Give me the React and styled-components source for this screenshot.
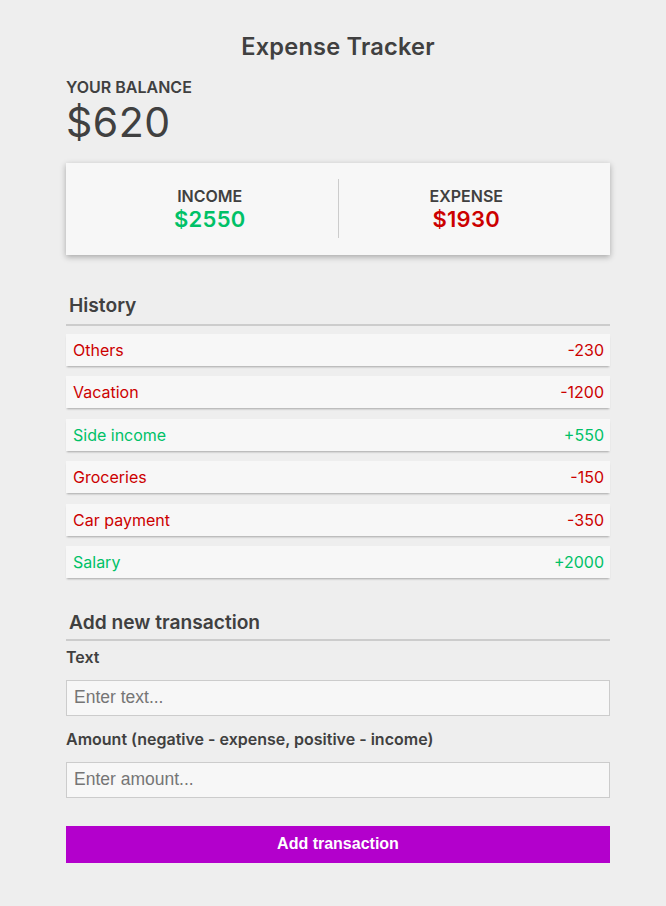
import React from 'react'
import styled, { createGlobalStyle } from 'styled-components'

const GlobalStyle = createGlobalStyle`
  body {
    margin: 0;
    background: #eeeeee;
    font-family: Inter, "Noto Sans", sans-serif;
    color: #404040;
  }
`

const transactions = [
  { id: 1, text: 'Others', amount: -230 },
  { id: 2, text: 'Vacation', amount: -1200 },
  { id: 3, text: 'Side income', amount: 550 },
  { id: 4, text: 'Groceries', amount: -150 },
  { id: 5, text: 'Car payment', amount: -350 },
  { id: 6, text: 'Salary', amount: 2000 },
]

const App = () => {
  return (
    <>
      <GlobalStyle />
      <Container>
        <Title>Expense Tracker</Title>
        <BalanceLabel>YOUR BALANCE</BalanceLabel>
        <Balance>$620</Balance>

        <SummaryCard>
          <SummaryCol $side="left">
            <SummaryLabel>INCOME</SummaryLabel>
            <Money $positive>$2550</Money>
          </SummaryCol>
          <Divider />
          <SummaryCol $side="right">
            <SummaryLabel>EXPENSE</SummaryLabel>
            <Money>$1930</Money>
          </SummaryCol>
        </SummaryCard>

        <SectionTitle>History</SectionTitle>
        <List>
          {transactions.map((t) => (
            <Item key={t.id} $positive={t.amount > 0}>
              <span>{t.text}</span>
              <span>{t.amount > 0 ? `+${t.amount}` : t.amount}</span>
            </Item>
          ))}
        </List>

        <SectionTitle $top="32px" $pad="5px" $bottom="6px">Add new transaction</SectionTitle>
        <Form onSubmit={(e) => e.preventDefault()}>
          <Field>
            <Label>Text</Label>
            <Input type="text" placeholder="Enter text..." />
          </Field>
          <Field>
            <Label>Amount (negative - expense, positive - income)</Label>
            <Input type="number" placeholder="Enter amount..." />
          </Field>
          <Button type="submit">Add transaction</Button>
        </Form>
      </Container>
    </>
  )
}

const Container = styled.div`
  width: 544px;
  margin: 0 0 0 66px;
  padding-top: 32px;
  padding-bottom: 40px;
`

const Title = styled.h2`
  margin: 0 0 15px;
  text-align: center;
  font-size: 23.6px;
  font-weight: 600;
  line-height: 30px;
  letter-spacing: 0.2px;
`

const BalanceLabel = styled.h4`
  margin: 0;
  font-size: 16px;
  font-weight: 600;
  line-height: 20px;
`

const Balance = styled.h1`
  margin: 0 0 16px;
  font-size: 41px;
  font-weight: 400;
  line-height: 50px;
  letter-spacing: 0.5px;
`

const SummaryCard = styled.div`
  display: flex;
  align-items: center;
  background: #f7f7f7;
  box-shadow: 0 2px 6px rgba(0, 0, 0, 0.3);
  padding: 16px 0 17px;
  margin-bottom: 38px;
`

const SummaryCol = styled.div`
  flex: 1;
  text-align: center;
  ${(p) => (p.$side === 'left' ? 'padding-left: 16px;' : 'padding-right: 16px;')}
`

const Divider = styled.div`
  width: 1px;
  height: 59px;
  background: #cccccc;
`

const SummaryLabel = styled.h4`
  margin: 0;
  font-size: 16px;
  font-weight: 600;
  line-height: 20px;
`

const Money = styled.p`
  margin: 0;
  font-size: 22px;
  font-weight: 600;
  line-height: 26px;
  letter-spacing: 0.3px;
  color: ${(p) => (p.$positive ? '#00c167' : '#cc0000')};
`

const SectionTitle = styled.h3`
  margin: ${(p) => p.$top || '0'} 0 ${(p) => p.$bottom || '8px'};
  padding: 0 3px ${(p) => p.$pad || '7px'};
  border-bottom: 2px solid #cccccc;
  font-size: 19.2px;
  font-weight: 600;
  line-height: 24px;
`

const List = styled.ul`
  list-style: none;
  margin: 0;
  padding: 0;
`

const Item = styled.li`
  display: flex;
  justify-content: space-between;
  align-items: center;
  height: 32px;
  padding: 0 6px 0 7px;
  margin-bottom: 10.4px;
  background: #f7f7f7;
  box-shadow: 0 2px 2px -1px rgba(0, 0, 0, 0.3);
  font-size: 16px;
  color: ${(p) => (p.$positive ? '#00c167' : '#cc0000')};
`

const Form = styled.form`
  display: flex;
  flex-direction: column;
`

const Field = styled.div`
  display: flex;
  flex-direction: column;
  margin-bottom: 13px;
`

const Label = styled.label`
  font-size: 16px;
  font-weight: 600;
  line-height: 20px;
  margin: 0 0 13px;
`

const Input = styled.input`
  box-sizing: border-box;
  width: 100%;
  height: 36px;
  border: 1px solid #cccccc;
  background: #f7f7f7;
  padding: 0 7px;
  font-family: "Liberation Sans", Arial, sans-serif;
  font-size: 17.5px;
  color: #333;
  outline: none;
  &::placeholder {
    color: #757575;
  }
`

const Button = styled.button`
  margin-top: 15px;
  height: 37px;
  border: 0;
  background: #b300cc;
  color: #ffffff;
  font-family: "Liberation Sans", Arial, sans-serif;
  font-size: 16px;
  font-weight: 700;
  cursor: pointer;
`

export default App
